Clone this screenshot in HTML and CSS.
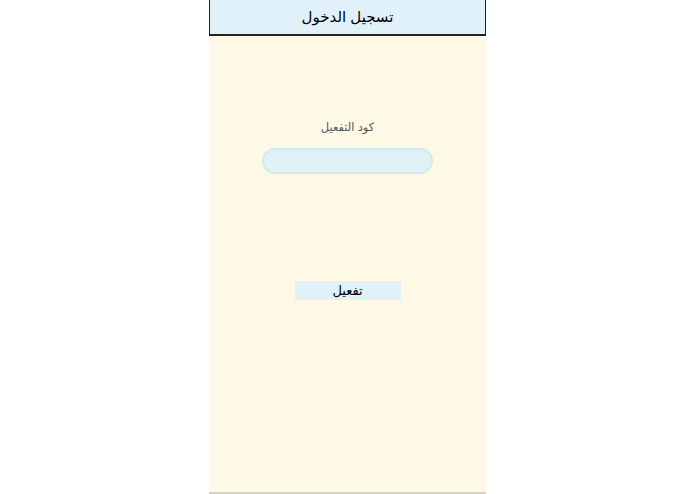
FILE: index.html
```html
<!DOCTYPE html>
<html lang="ar" dir="rtl">
  <head>
    <meta charset="UTF-8" />
    <title>تسجيل الدخول</title>
    <link rel="stylesheet" href="styles.css">
  </head>
  <body>
    <div class="screen">
      <div class="header">تسجيل الدخول</div>
      <div class="content">
        <label class="field-label" for="code">كود التفعيل</label>
        <input class="code-input" id="code" type="text" />
        <button class="activate-btn">تفعيل</button>
      </div>
    </div>
  </body>
</html>
```

FILE: styles.css
```css
body {
  margin: 0;
  font-family: "Liberation Sans", "DejaVu Sans", Arial, sans-serif;
  background-color: #fff;
}
.screen {
  width: 277px;
  height: 492px;
  margin: 0 auto;
  background-color: #fef9e6;
  border-bottom: 2px solid #d6d3c8;
  display: flex;
  flex-direction: column;
}
.header {
  height: 36px;
  box-sizing: border-box;
  background-color: #e1f1f9;
  border: 1px solid #222;
  border-top: none;
  border-bottom-width: 2px;
  display: flex;
  align-items: center;
  justify-content: center;
  font-size: 15px;
  color: #000;
}
.content {
  display: flex;
  flex-direction: column;
  align-items: center;
}
.field-label {
  margin-top: 84px;
  font-size: 11.5px;
  color: #555;
}
.code-input {
  margin-top: 14px;
  width: 171px;
  height: 26px;
  box-sizing: border-box;
  border: 2px solid #d2ebef;
  border-radius: 13px;
  background-color: #e1f1f8;
  outline: none;
}
.activate-btn {
  margin-top: 107px;
  width: 106px;
  height: 19px;
  padding: 0;
  border: none;
  background-color: #e1f1f8;
  font-family: "Liberation Sans", "DejaVu Sans", Arial, sans-serif;
  font-size: 13px;
  color: #000;
}
```
